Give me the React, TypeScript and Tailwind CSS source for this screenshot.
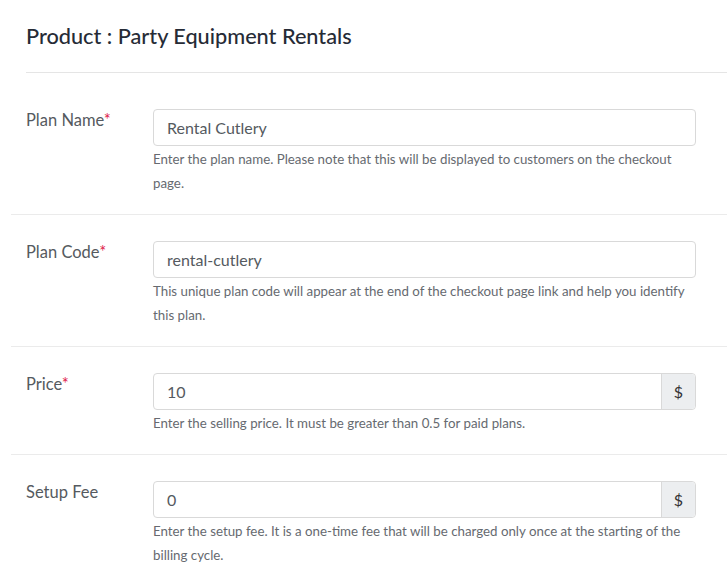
import type { ReactNode } from "react";

interface FieldRowProps {
  label: string;
  required?: boolean;
  value: string;
  addon?: string;
  help: ReactNode;
}

function FieldRow({ label, required, value, addon, help }: FieldRowProps) {
  return (
    <div className="flex border-b border-[#ebebeb] pt-[26px] pb-[19px] pl-[15px] pr-[31px]">
      <div className="w-[127px] shrink-0 text-[16.5px] leading-[22px] text-[#555a60]">
        {label}
        {required && <span className="text-[#e0284f]">*</span>}
      </div>
      <div className="flex-1">
        <div className="flex h-[37px] rounded-[4px] border border-[#d9d9d9]">
          <input
            readOnly
            value={value}
            className="min-w-0 flex-1 bg-transparent px-[13px] text-[16px] text-[#555a60] outline-none"
          />
          {addon && (
            <span className="flex w-[34px] items-center justify-center rounded-r-[4px] border-l border-[#d9d9d9] bg-[#eceef0] text-[16px] text-[#333]">
              {addon}
            </span>
          )}
        </div>
        <p className="pt-px text-[13.3px] leading-[24px] text-[#666a70]">{help}</p>
      </div>
    </div>
  );
}

export default function App() {
  return (
    <div className="min-h-screen bg-white pl-[11px] font-['Lato',sans-serif]">
      <div className="mb-[10px] ml-[15px] border-b border-[#e5e5e5] pt-[22px] pb-[22px]">
        <h1 className="text-[21.7px] leading-[28px] font-medium text-[#262b36]">
          Product : Party Equipment Rentals
        </h1>
      </div>

      <FieldRow
        label="Plan Name"
        required
        value="Rental Cutlery"
        help="Enter the plan name. Please note that this will be displayed to customers on the checkout page."
      />
      <FieldRow
        label="Plan Code"
        required
        value="rental-cutlery"
        help="This unique plan code will appear at the end of the checkout page link and help you identify this plan."
      />
      <FieldRow
        label="Price"
        required
        value="10"
        addon="$"
        help="Enter the selling price. It must be greater than 0.5 for paid plans."
      />
      <FieldRow
        label="Setup Fee"
        value="0"
        addon="$"
        help="Enter the setup fee. It is a one-time fee that will be charged only once at the starting of the billing cycle."
      />
    </div>
  );
}
